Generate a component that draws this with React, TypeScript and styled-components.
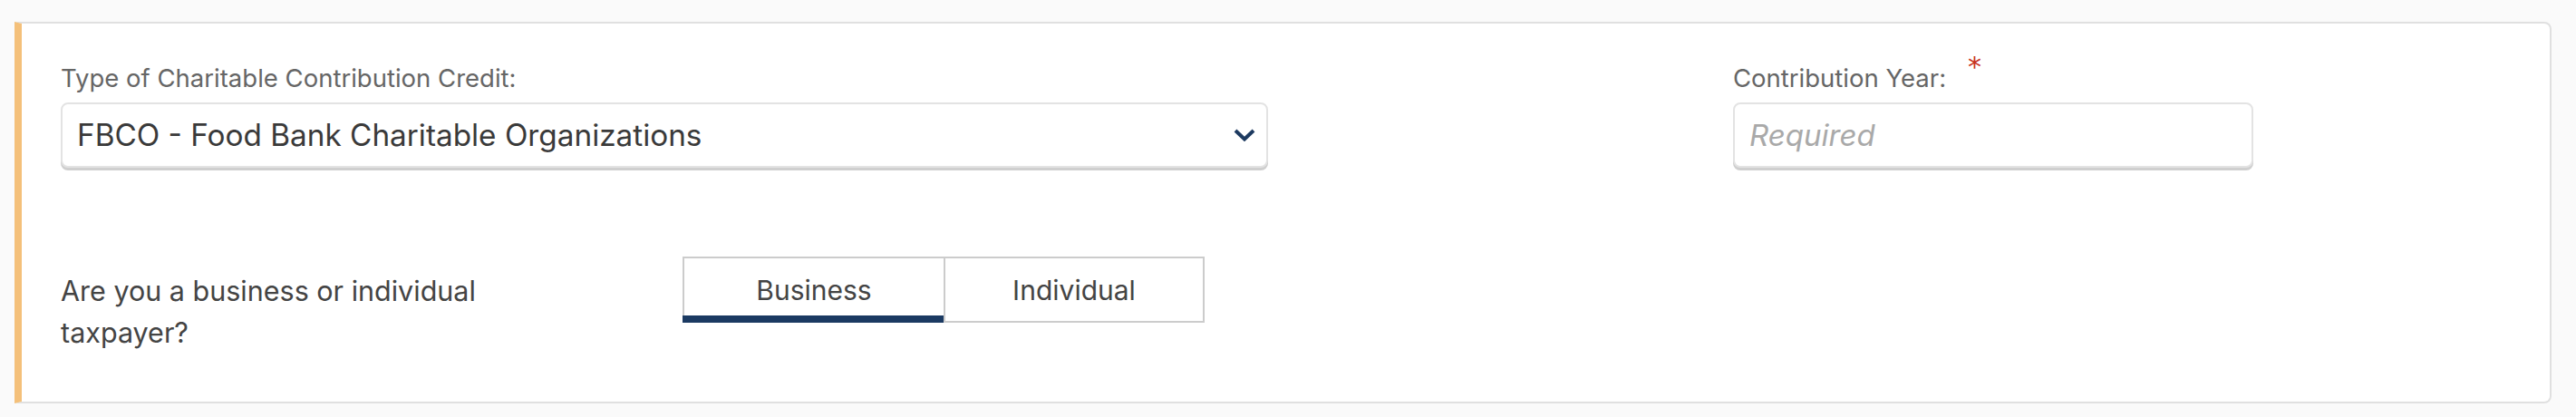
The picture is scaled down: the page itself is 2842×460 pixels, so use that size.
import React from "react";
import styled, { createGlobalStyle } from "styled-components";

const Global = createGlobalStyle`
  html, body { margin: 0; padding: 0; background: #fafafa; }
  body { font-family: Inter, "Noto Sans", Roboto, sans-serif; }
  * { box-sizing: border-box; }
`;

const Page = styled.div`
  padding: 24px 27px 17px 16px;
  background: #fafafa;
`;

const Card = styled.section`
  background: #ffffff;
  border: 2px solid #e0e0e0;
  border-left: 8px solid #f4c07a;
  border-radius: 0 8px 8px 0;
  padding: 44px 43px 53px 43px;
  display: flex;
  flex-direction: column;
  gap: 98px;
`;

const Row = styled.div`
  display: flex;
  align-items: flex-start;
`;

const Field = styled.div<{ $width: number; $offset?: number }>`
  display: flex;
  flex-direction: column;
  width: ${(p) => p.$width}px;
  margin-left: ${(p) => p.$offset ?? 0}px;
`;

const Label = styled.label`
  font-size: 27.5px;
  line-height: 32px;
  color: #666666;
  margin-bottom: 11px;
  white-space: nowrap;
`;

const RequiredMark = styled.span`
  font-family: "DejaVu Sans", sans-serif;
  color: #c8321f;
  font-size: 30px;
  line-height: 0;
  margin-left: 24px;
  vertical-align: 12px;
`;

const boxBase = `
  height: 72px;
  border: 2px solid #e3e3e3;
  border-radius: 8px;
  box-shadow: 0 3px 0 #cfcfcf;
  background: #ffffff;
`;

const SelectBox = styled.div`
  ${boxBase}
  display: flex;
  align-items: center;
  justify-content: space-between;
  padding: 0 12px 0 16px;
  cursor: pointer;
`;

const SelectText = styled.span`
  font-size: 33.3px;
  color: #3a3a3a;
  white-space: nowrap;
`;

const TextInput = styled.input`
  ${boxBase}
  width: 100%;
  padding: 0 16px;
  font-family: inherit;
  font-size: 33px;
  color: #3a3a3a;
  outline: none;
  &::placeholder {
    color: #a9a9a9;
    font-style: italic;
  }
`;

const QuestionCol = styled.div`
  width: 686px;
  padding-top: 15px;
`;

const Question = styled.p`
  margin: 0;
  max-width: 540px;
  font-size: 30.5px;
  line-height: 46px;
  color: #444444;
`;

const Toggle = styled.div`
  display: flex;
`;

const Segment = styled.button<{ $active?: boolean; $first?: boolean }>`
  position: relative;
  width: 288px;
  height: 73px;
  background: #ffffff;
  border: 2px solid #cccccc;
  border-right: ${(p) => (p.$first ? "none" : "2px solid #cccccc")};
  font-family: inherit;
  font-size: 30px;
  color: #444444;
  padding: 0;
  cursor: pointer;
  &::after {
    content: "";
    display: ${(p) => (p.$active ? "block" : "none")};
    position: absolute;
    left: -2px;
    right: 0;
    bottom: -2px;
    height: 8px;
    background: #1b3a62;
  }
`;

const Chevron = () => (
  <svg width="24" height="14" viewBox="0 0 24 14" aria-hidden="true">
    <path d="M2 2 L12 11.5 L22 2" fill="none" stroke="#1d3a60" strokeWidth="4" />
  </svg>
);

export default function App() {
  return (
    <>
      <Global />
      <Page>
        <Card>
          <Row>
            <Field $width={1332}>
              <Label>Type of Charitable Contribution Credit:</Label>
              <SelectBox>
                <SelectText>FBCO - Food Bank Charitable Organizations</SelectText>
                <Chevron />
              </SelectBox>
            </Field>
            <Field $width={574} $offset={513}>
              <Label>
                Contribution Year:<RequiredMark>*</RequiredMark>
              </Label>
              <TextInput placeholder="Required" />
            </Field>
          </Row>
          <Row>
            <QuestionCol>
              <Question>Are you a business or individual taxpayer?</Question>
            </QuestionCol>
            <Toggle>
              <Segment $active $first>Business</Segment>
              <Segment>Individual</Segment>
            </Toggle>
          </Row>
        </Card>
      </Page>
    </>
  );
}
